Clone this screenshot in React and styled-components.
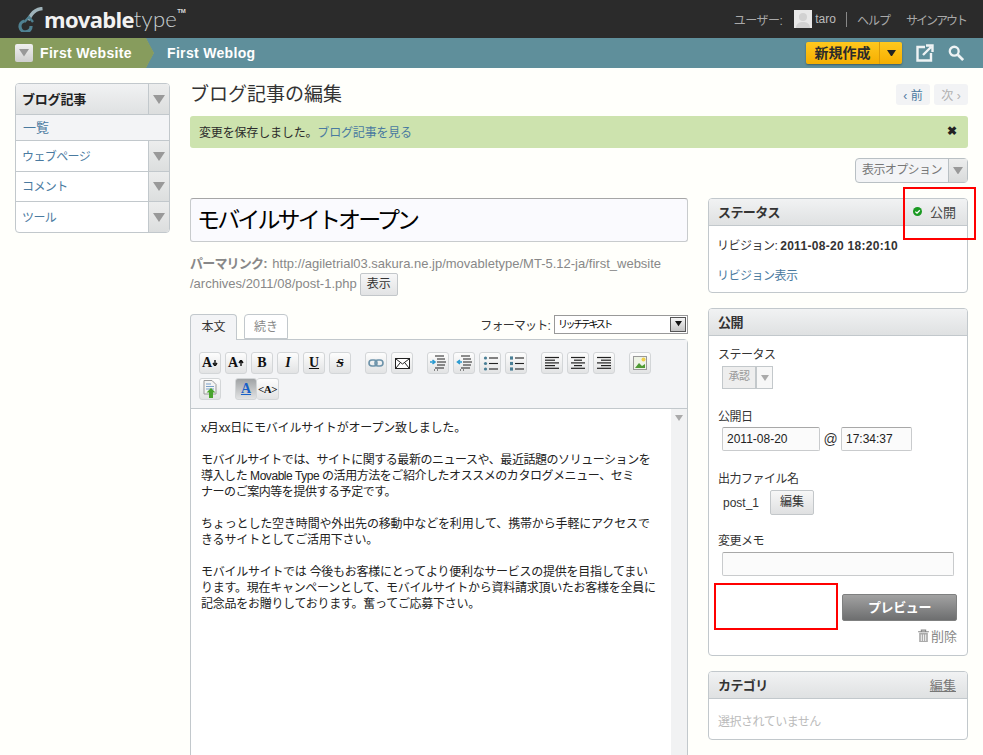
import React from 'react';
import styled, { createGlobalStyle } from 'styled-components';

const Global = createGlobalStyle`
  html, body { margin: 0; padding: 0; height: 755px; overflow: hidden; background: #fffffb; }
  body { font-family: "Liberation Sans", "Noto Sans CJK JP", sans-serif; font-size: 13px; color: #2b2b2b; }
  * { box-sizing: border-box; }
  #root { height: 755px; overflow: hidden; position: relative; }
`;

const TopBar = styled.header`
  height: 38px; background: #2b2b2b; display: flex; align-items: center; justify-content: space-between;
  padding: 0 17px 0 18px;
`;
const Logo = styled.div`
  display: flex; align-items: flex-start; color: #fff; height: 38px; padding-top: 7px;
`;
const LogoBold = styled.span`
  font: bold 22px/24px "Open Sans", "Liberation Sans", sans-serif; color: #f2f2f2; margin-left: 1px; letter-spacing: -0.7px;
`;
const LogoLight = styled.span`
  font: 300 22px/24px "Lato", "Open Sans", sans-serif; color: #c9d0d2; letter-spacing: 0.3px;
`;
const LogoTm = styled.sup`
  font: bold 6px/6px "Liberation Sans", sans-serif; color: #ddd; margin: 1px 0 0 0;
`;
const UserNav = styled.nav`
  display: flex; align-items: center; color: #a9a9a9; font-size: 12px; letter-spacing: -0.5px;
`;
const Avatar = styled.span`
  width: 18px; height: 18px; margin: 0 3px 0 12px; background: #e4e4e4; display: block;
`;
const Divider = styled.span`
  width: 1px; height: 15px; background: #888; margin: 0 10px 0 10px;
`;
const NavLabel = styled.span`
  margin-left: ${p => p.$gap || 0}px; letter-spacing: ${p => p.$ls}px;
`;
const NavName = styled.span`font-size: 12px; letter-spacing: 0; color: #bbb;`;

const NavBar = styled.div`
  height: 30px; background: #5f8f9b; display: flex; align-items: center; position: relative;
`;
const SiteTab = styled.div`
  width: 154px; height: 30px; background: #879c5d; display: flex; align-items: center; padding-left: 15px;
  clip-path: polygon(0 0, 146px 0, 100% 50%, 146px 100%, 0 100%);
`;
const NavChevron = styled.svg`
  width: 10px; height: 30px; margin-left: -9px; flex: none;
`;
const SiteMenu = styled.span`
  width: 18px; height: 18px; border-radius: 2px; background: linear-gradient(#f0f0f0, #cfcfcf);
  display: flex; align-items: center; justify-content: center; margin-right: 7px;
`;
const SiteName = styled.span`
  color: #fff; font: bold 14px "Liberation Sans", sans-serif; letter-spacing: .33px; margin-left: ${p => p.$ml || 0}px;
`;
const NavRight = styled.div`
  margin-left: auto; display: flex; align-items: center; padding-right: 19px;
`;
const NewButton = styled.div`
  width: 96px; height: 22px; display: flex; border-radius: 2px;
  background: linear-gradient(#ffc81e, #f6ae00); box-shadow: 0 1px 2px rgba(0,0,0,.35);
`;
const NewLabel = styled.span`
  width: 74px; text-align: center; font-weight: 700; font-size: 14px; line-height: 22px; color: #2b2b2b;
  border-right: 1px solid #dc9c08;
`;
const NewCaret = styled.span`
  flex: 1; display: flex; align-items: center; justify-content: center;
`;
const NavIcon = styled.svg`
  width: ${p => p.$s}px; height: ${p => p.$s}px; margin-left: ${p => p.$ml}px; flex: none;
`;

const Page = styled.div`
  display: flex; padding: 15px 15px 0; align-items: flex-start; height: 687px;
`;
const Side = styled.aside`
  width: 155px; flex: none; border: 1px solid #c2c8cc; border-radius: 4px; overflow: hidden; background: #fff;
`;
const SideRow = styled.div`
  display: flex; height: ${p => p.$h}px; ${p => p.$border !== false && 'border-bottom: 1px solid #c2c8cc;'}
  ${p => p.$active && 'background: linear-gradient(#f1f2f3, #dfe1e2);'}
`;
const SideLabel = styled.a`
  flex: 1; padding: 0 0 2px 6px; display: flex; align-items: center; font-size: ${p => p.$active ? 13 : 12}px; letter-spacing: ${p => p.$active ? -0.2 : -0.6}px;
  color: ${p => p.$active ? '#222' : '#4a7aa0'}; font-weight: ${p => p.$active ? 700 : 400};
`;
const SideArrow = styled.span`
  width: 21px; border-left: 1px solid #c2c8cc; display: flex; align-items: center; justify-content: center;
  background: linear-gradient(#eceded, #dcdede);
`;
const SideSub = styled.a`
  display: flex; align-items: center; height: 26px; padding: 0 0 2px 7px; background: #f3f4f6; color: #4a7aa0;
  border-bottom: 1px solid #c2c8cc; font-size: 13px;
`;

const Main = styled.main`width: 778px; margin-left: 20px; flex: none;`;
const TitleRow = styled.div`display: flex; justify-content: space-between; align-items: flex-start; height: 33px;`;
const Title = styled.h1`
  margin: 1px 0 0; font-weight: 400; font-size: 19px; line-height: 22px; color: #333; letter-spacing: 0;
`;
const Pager = styled.div`display: flex; gap: 4px; margin-top: 1px;`;
const PagerItem = styled.span`
  height: 21px; width: 34px; background: #f2f3f5; border-radius: 3px; display: flex; align-items: center; justify-content: center;
  font-size: 12px; color: ${p => p.$dim ? '#b0b0b0' : '#4a7aa0'};
`;
const Message = styled.div`
  height: 32px; background: #cde3ae; border-radius: 3px; display: flex; align-items: center; justify-content: space-between;
  padding: 0 11px 2px 9px; font-size: 12px; letter-spacing: -0.17px;
`;
const MsgLink = styled.a`color: #4a7aa0;`;
const Close = styled.b`font-size: 12px; color: #222; line-height: 1;`;
const OptionRow = styled.div`display: flex; justify-content: flex-end; margin-top: 10px; height: 40px;`;
const OptionBtn = styled.div`
  width: 113px; height: 25px; border: 1px solid #b9c0c4; border-radius: 4px; display: flex;
  background: #f3f4f6; color: #777; font-size: 12px; letter-spacing: -0.6px;
`;
const OptionLabel = styled.span`flex: 1; padding-left: 6px; line-height: 23px;`;
const OptionArrow = styled.span`
  width: 19px; border-left: 1px solid #b9c0c4; display: flex; align-items: center; justify-content: center;
  background: linear-gradient(#eceded, #d9dbdb);
`;
const Columns = styled.div`display: flex; justify-content: space-between; align-items: flex-start;`;
const Left = styled.div`width: 498px;`;
const Right = styled.div`width: 260px; display: flex; flex-direction: column; gap: 15px;`;
const TitleInput = styled.div`
  height: 44px; border: 1px solid #c8cbcd; border-top-color: #a6a6a6; border-radius: 3px; background: #fafafe;
  font-size: 23px; line-height: 42px; padding-left: 6px; color: #000; letter-spacing: -2.85px;
`;
const Permalink = styled.div`
  margin-top: 12px; font-size: 13px; line-height: 19px; color: #888; height: 47px;
`;
const PermaBold = styled.b`letter-spacing: -0.8px; margin-right: 2px;`;
const SmallBtn = styled.span`
  display: inline-block; height: 23px; width: 38px; text-align: center; margin-left: 3px; border: 1px solid #c3c7ca; border-radius: 2px;
  background: linear-gradient(#f7f7f7, #e2e3e4); color: #333; font-size: 12px; line-height: 21px; vertical-align: middle;
`;
const Tabs = styled.div`
  display: flex; margin-top: 12px; height: 26px; align-items: flex-end; position: relative;
`;
const Tab = styled.div`
  height: ${p => p.$active ? 26 : 25}px; width: ${p => p.$w}px; margin-right: 7px; border: 1px solid #c2c8cc;
  border-bottom: ${p => p.$active ? '0' : '1px solid #c2c8cc'}; border-radius: 4px 4px 0 0;
  background: ${p => p.$active ? '#f3f4f6' : '#fff'}; color: ${p => p.$active ? '#333' : '#888'};
  text-align: center; font-size: 12px; line-height: 24px; position: relative; z-index: 1; margin-bottom: ${p => p.$active ? -1 : 0}px;
`;
const Format = styled.div`
  margin-left: auto; display: flex; align-items: center; height: 20px; margin-bottom: 5px; font-size: 12px; letter-spacing: -0.8px; color: #333;
`;
const FormatSelect = styled.div`
  width: 134px; height: 19px; margin-left: 4px; border: 1px solid #999; background: #fff; display: flex; justify-content: space-between;
  font-size: 10px; line-height: 17px; padding-left: 3px; letter-spacing: -2.4px; color: #000;
`;
const FormatBtn = styled.span`
  width: 16px; height: 15px; margin: 1px; background: linear-gradient(#f5f5f5, #c4c4c4); border: 1px solid #555;
  display: flex; align-items: center; justify-content: center;
`;
const Editor = styled.div`
  border: 1px solid #c2c8cc; border-radius: 0 4px 0 0; height: 440px; background: #fff;
`;
const Toolbar = styled.div`
  height: 69px; background: #f3f4f6; border-bottom: 1px solid #c2c8cc; padding: 12px 8px 0;
  display: flex; flex-direction: column; gap: 4px;
`;
const ToolRow = styled.div`display: flex; gap: 4px;`;
const Tool = styled.span`
  width: 22px; height: 22px; border: 1px solid #d3d6d8; border-radius: 3px; display: flex; align-items: center; justify-content: center;
  background: ${p => p.$on ? 'linear-gradient(#a0a3a5, #e2e3e4)' : 'linear-gradient(#fdfdfd, #e2e3e4)'}; margin-left: ${p => p.$ml || 0}px;
  font: bold ${p => p.$fs || 13}px "Liberation Serif", serif; color: ${p => p.$c || '#111'};
  ${p => p.$u && 'text-decoration: underline;'} ${p => p.$i && 'font-style: italic;'} ${p => p.$s && 'text-decoration: line-through;'}
  ${p => p.$join && 'margin-left: -4px; border-left: 0; letter-spacing: -.5px;'}
`;
const EditorBody = styled.div`
  display: flex; height: 370px;
`;
const Content = styled.div`
  flex: 1; padding: 11px 0 0 10px; font-size: 12px; line-height: 16px; color: #222;
`;
const Para = styled.p`margin: 0 0 16px; white-space: pre; letter-spacing: ${p => p.$ls}px;`;
const Scroll = styled.div`
  width: 16px; background: #f1f2f3; display: flex; justify-content: center; padding-top: 6px;
`;
const Panel = styled.section`
  border: 1px solid #c2c8cc; border-radius: 4px; background: #fff; height: ${p => p.$h}px; overflow: hidden;
`;
const PanelHead = styled.div`
  height: 27px; background: linear-gradient(#f1f2f3, #dfe1e2); border-bottom: 1px solid #c2c8cc;
  display: flex; align-items: center; justify-content: space-between; padding: 0 11px 2px 9px;
`;
const PanelTitle = styled.h3`margin: 0; font-size: 13px; font-weight: 700; color: #333; letter-spacing: -0.6px;`;
const PanelBody = styled.div`padding: ${p => p.$pad || '11px 9px 0'}; font-size: 12px; letter-spacing: -0.5px;`;
const HeadRight = styled.span`display: flex; align-items: center; gap: 8px; font-size: 13px; color: #444; letter-spacing: 0;`;
const HeadLink = styled.a`font-size: 13px; color: #777; text-decoration: underline; letter-spacing: 0.1px;`;
const Rev = styled.b`letter-spacing: .3px; color: #333;`;
const RevLine = styled.div`height: 30px; line-height: 17px; color: #333;`;
const BlueLink = styled.a`color: #4a7aa0; line-height: 17px;`;
const Field = styled.div`height: ${p => p.$h}px; color: #333;`;
const FieldLabel = styled.div`line-height: 17px;`;
const StatusSelect = styled.div`
  display: flex; width: 51px; height: 23px; margin: 2px 0 0 4px; border: 1px solid #c3c8cb; background: #eee; color: #999; font-size: 11px; line-height: 18px;
`;
const StatusText = styled.span`flex: 1; text-align: center;`;
const StatusArrow = styled.span`
  width: 17px; background: #f7f7f7; border-left: 2px solid #c3c8cb; display: flex; align-items: center; justify-content: center;
`;
const DateRow = styled.div`display: flex; align-items: center; margin: 1px 0 0 4px; letter-spacing: 0;`;
const TextBox = styled.span`
  display: block; width: ${p => p.$w}px; height: ${p => p.$h || 24}px; border: 1px solid #c9cbcd; border-top-color: #a8a8a8; border-radius: 2px;
  background: #fbfbfb; padding-left: 4px; line-height: 22px; font-size: 12px; color: #222;
`;
const At = styled.span`width: 21px; text-align: center; font-size: 14px; color: #333;`;
const FileRow = styled.div`display: flex; align-items: center; margin: 2px 0 0 5px; letter-spacing: 0;`;
const FileName = styled.span`width: 47px; color: #333;`;
const EditBtn = styled.span`
  width: 44px; height: 25px; border: 1px solid #c3c7ca; border-radius: 2px; background: linear-gradient(#f7f7f7, #dfe0e1);
  text-align: center; line-height: 23px; color: #333;
`;
const MemoBox = styled.div`margin: 2px 0 0 4px;`;
const Actions = styled.div`display: flex; justify-content: flex-end; margin: 17px 1px 0 0;`;
const PreviewBtn = styled.span`
  width: 115px; height: 27px; border-radius: 2px; background: linear-gradient(#a2a2a2, #6d6e6f); border: 1px solid #7f8080;
  text-align: center; color: #fff; font-weight: 700; font-size: 13px; line-height: 25px; letter-spacing: -0.4px;
`;
const DeleteRow = styled.div`display: flex; justify-content: flex-end; align-items: center; margin: 5px 1px 0 0; color: #888; gap: 1px; font-size: 13px; letter-spacing: 0;`;
const Muted = styled.div`color: #bbb; line-height: 17px;`;
const Mark = styled.div`
  position: absolute; left: ${p => p.$x}px; top: ${p => p.$y}px; width: ${p => p.$w}px; height: ${p => p.$h}px; border: 2px solid #f00;
  background: ${p => p.$fill ? '#fff' : 'transparent'};
`;
const Sized = styled.svg`display: block; width: ${p => p.$w}px; height: ${p => p.$h || p.$w}px;`;

const Tri = ({ s = 12, c = '#999' }) => (
  <Sized $w={s} $h={s * 0.75} viewBox="0 0 12 9"><path d="M0 0h12L6 9z" fill={c} /></Sized>
);

const Lines = ({ n = 4, w = 14, c = '#222', s = 3 }) => (
  <Sized $w={w} $h={w} viewBox="0 0 14 14">
    {Array.from({ length: n }, (_, i) => (
      <path key={i} d={`M${s === 'c' && i % 2 ? 3 : s === 'r' && i % 2 ? 4 : 0} ${1.5 + i * 2.7}H${s === 'c' && i % 2 ? 11 : s === 'l' && i % 2 ? 10 : 14}`} stroke={c} strokeWidth="1.2" />
    ))}
  </Sized>
);
const ListIcon = ({ num }) => (
  <Sized $w={15} viewBox="0 0 15 15">
    {[2, 7.5, 13].map(y => (
      <g key={y}>
        {num ? <rect x="1" y={y - 1.6} width="3" height="3.2" fill="#4a7f96" /> : <circle cx="2.5" cy={y} r="1.6" fill="#4a7f96" />}
        <path d={`M6 ${y}H15`} stroke="#222" strokeWidth="1.1" />
      </g>
    ))}
  </Sized>
);
const Indent = ({ out }) => (
  <Sized $w={16} viewBox="0 0 16 16">
    <path d="M5 1h9M7 4h8M7 7h9M7 10h8M5 13h9" stroke="#222" strokeWidth="1.1" />
    <path d="M4 15h1M7 15h1" stroke="#222" strokeWidth="1" />
    <path d={out ? 'M6 7H2M4 5 1.5 7 4 9' : 'M0 7H4M2.5 5 5 7 2.5 9'} stroke="#2a9ad0" strokeWidth="1.6" fill="none" />
  </Sized>
);

export default function App() {
  return (
    <>
      <Global />
      <TopBar>
        <Logo>
          <Sized $w={25} $h={25} viewBox="0 0 25 25">
            <path d="M24.5 1.5C19 2 16 4 13.5 7.5L10 13" stroke="#9fb3ba" strokeWidth="3.4" fill="none" />
            <path d="M6.5 14a5.5 5.5 0 1 0 6.5 5" stroke="#4f8191" strokeWidth="3.2" fill="none" />
            <path d="M6.5 15 11 10l4 5" fill="none" stroke="#4f8191" strokeWidth="2.4" />
          </Sized>
          <LogoBold>movable</LogoBold><LogoLight>type</LogoLight><LogoTm>TM</LogoTm>
        </Logo>
        <UserNav>
          ユーザー:
          <Avatar>
            <Sized $w={18} viewBox="0 0 18 18"><rect width="18" height="18" fill="#e8e8e8" /><circle cx="9" cy="7" r="4" fill="#d2d2d2" /><path d="M2 18c0-5 4-6 7-6s7 1 7 6z" fill="#d2d2d2" /></Sized>
          </Avatar>
          <NavName>taro</NavName>
          <Divider />
          <NavLabel $ls={-1}>ヘルプ</NavLabel>
          <NavLabel $gap={16} $ls={-2}>サインアウト</NavLabel>
        </UserNav>
      </TopBar>
      <NavBar>
        <SiteTab>
          <SiteMenu><Tri s={10} /></SiteMenu>
          <SiteName>First Website</SiteName>
        </SiteTab>
        <NavChevron viewBox="0 0 10 30"><path d="M0 0 8 15 0 30" fill="none" stroke="#cfd8c0" strokeWidth="1" /></NavChevron>
        <SiteName $ml={12}>First Weblog</SiteName>
        <NavRight>
          <NewButton>
            <NewLabel>新規作成</NewLabel>
            <NewCaret><Tri s={9} c="#222" /></NewCaret>
          </NewButton>
          <NavIcon $s={18} $ml={14} viewBox="0 0 18 18">
            <path d="M9 3H1.5v13.5H15V9" stroke="#eef3f4" strokeWidth="2.4" fill="none" />
            <path d="M7 11 15 3M10 1.5h6.5V8" stroke="#eef3f4" strokeWidth="2.4" fill="none" />
          </NavIcon>
          <NavIcon $s={16} $ml={14} viewBox="0 0 18 18">
            <circle cx="7" cy="7" r="5" stroke="#eef3f4" strokeWidth="2.6" fill="none" />
            <path d="M11 11l6 6" stroke="#eef3f4" strokeWidth="3" />
          </NavIcon>
        </NavRight>
      </NavBar>
      <Page>
        <Side>
          <SideRow $h={31} $active><SideLabel $active>ブログ記事</SideLabel><SideArrow><Tri /></SideArrow></SideRow>
          <SideSub>一覧</SideSub>
          <SideRow $h={31}><SideLabel>ウェブページ</SideLabel><SideArrow><Tri /></SideArrow></SideRow>
          <SideRow $h={30}><SideLabel>コメント</SideLabel><SideArrow><Tri /></SideArrow></SideRow>
          <SideRow $h={30} $border={false}><SideLabel>ツール</SideLabel><SideArrow><Tri /></SideArrow></SideRow>
        </Side>
        <Main>
          <TitleRow>
            <Title>ブログ記事の編集</Title>
            <Pager>
              <PagerItem>‹ 前</PagerItem>
              <PagerItem $dim>次 ›</PagerItem>
            </Pager>
          </TitleRow>
          <Message>
            <span>変更を保存しました。<MsgLink>ブログ記事を見る</MsgLink></span>
            <Close>✖</Close>
          </Message>
          <OptionRow>
            <OptionBtn><OptionLabel>表示オプション</OptionLabel><OptionArrow><Tri s={10} /></OptionArrow></OptionBtn>
          </OptionRow>
          <Columns>
            <Left>
              <TitleInput>モバイルサイトオープン</TitleInput>
              <Permalink>
                <PermaBold>パーマリンク:</PermaBold> http://agiletrial03.sakura.ne.jp/movabletype/MT-5.12-ja/first_website<br />
                /archives/2011/08/post-1.php<SmallBtn>表示</SmallBtn>
              </Permalink>
              <Tabs>
                <Tab $active $w={47}>本文</Tab>
                <Tab $w={44}>続き</Tab>
                <Format>
                  フォーマット:
                  <FormatSelect>リッチテキスト<FormatBtn><Tri s={7} c="#111" /></FormatBtn></FormatSelect>
                </Format>
              </Tabs>
              <Editor>
                <Toolbar>
                  <ToolRow>
                    <Tool $fs={14}>A<Sized $w={6} viewBox="0 0 6 6"><path d="M3 0v4M1 3l2 3 2-3" stroke="#111" strokeWidth="1.4" fill="none" /></Sized></Tool>
                    <Tool $fs={14}>A<Sized $w={6} viewBox="0 0 6 6"><path d="M3 6V2M1 3l2-3 2 3" stroke="#111" strokeWidth="1.4" fill="none" /></Sized></Tool>
                    <Tool $fs={14}>B</Tool>
                    <Tool $i $fs={14}>I</Tool>
                    <Tool $u $fs={14}>U</Tool>
                    <Tool $s $i>S</Tool>
                    <Tool $ml={10}>
                      <Sized $w={16} $h={10} viewBox="0 0 16 10"><rect x="1" y="2" width="8" height="6" rx="3" stroke="#6d93aa" strokeWidth="1.6" fill="none" /><rect x="7" y="2" width="8" height="6" rx="3" stroke="#6d93aa" strokeWidth="1.6" fill="none" /></Sized>
                    </Tool>
                    <Tool>
                      <Sized $w={15} $h={11} viewBox="0 0 15 11"><rect x=".5" y=".5" width="14" height="10" fill="#fff" stroke="#222" /><path d="M1 1l6.5 5L14 1M1 10l4-5M14 10l-4-5" stroke="#222" fill="none" /></Sized>
                    </Tool>
                    <Tool $ml={10}><Indent /></Tool>
                    <Tool><Indent out /></Tool>
                    <Tool><ListIcon /></Tool>
                    <Tool><ListIcon num /></Tool>
                    <Tool $ml={10}><Lines n={5} s="l" /></Tool>
                    <Tool><Lines n={5} s="c" /></Tool>
                    <Tool><Lines n={5} s="r" /></Tool>
                    <Tool $ml={10}>
                      <Sized $w={14} viewBox="0 0 14 14"><rect x=".5" y=".5" width="13" height="13" fill="#eef3e6" stroke="#999" /><path d="M2 12l4-5 3 3 3-2v4z" fill="#4f9a35" /><circle cx="10.5" cy="3.5" r="2" fill="#f0cf4a" /></Sized>
                    </Tool>
                  </ToolRow>
                  <ToolRow>
                    <Tool>
                      <Sized $w={14} $h={18} viewBox="0 0 14 18"><path d="M1 .5h8l4 4V14H1z" fill="#f4f4f4" stroke="#999" /><path d="M3 4h5M3 6.5h8M3 9h8" stroke="#7ba0c9" /><path d="M8 8l4.5 4.5H10V18H6v-5.5H3.5z" fill="#48a32c" /></Sized>
                    </Tool>
                    <Tool $on $ml={10} $u $c="#1860c8" $fs={14}>A</Tool>
                    <Tool $join $fs={11}>&lt;A&gt;</Tool>
                  </ToolRow>
                </Toolbar>
                <EditorBody>
                  <Content>
                    <Para $ls={-0.18}>x月xx日にモバイルサイトがオープン致しました。</Para>
                    <Para $ls={-0.45}>{'モバイルサイトでは、サイトに関する最新のニュースや、最近話題のソリューションを\n導入した Movable Type の活用方法をご紹介したオススメのカタログメニュー、セミ\nナーのご案内等を提供する予定です。'}</Para>
                    <Para $ls={-0.15}>{'ちょっとした空き時間や外出先の移動中などを利用して、携帯から手軽にアクセスで\nきるサイトとしてご活用下さい。'}</Para>
                    <Para $ls={-0.27}>{'モバイルサイトでは 今後もお客様にとってより便利なサービスの提供を目指してまい\nります。現在キャンペーンとして、モバイルサイトから資料請求頂いたお客様を全員に\n記念品をお贈りしております。奮ってご応募下さい。'}</Para>
                  </Content>
                  <Scroll><Tri s={8} c="#aaa" /></Scroll>
                </EditorBody>
              </Editor>
            </Left>
            <Right>
              <Panel $h={95}>
                <PanelHead>
                  <PanelTitle>ステータス</PanelTitle>
                  <HeadRight>
                    <Sized $w={9} viewBox="0 0 9 9"><circle cx="4.5" cy="4.5" r="4.5" fill="#1a9a22" /><path d="M2.3 4.6 4 6.2l2.8-3" stroke="#fff" strokeWidth="1.3" fill="none" /></Sized>
                    公開
                  </HeadRight>
                </PanelHead>
                <PanelBody $pad="12px 8px 0">
                  <RevLine>リビジョン: <Rev>2011-08-20 18:20:10</Rev></RevLine>
                  <BlueLink>リビジョン表示</BlueLink>
                </PanelBody>
              </Panel>
              <Panel $h={348}>
                <PanelHead><PanelTitle>公開</PanelTitle></PanelHead>
                <PanelBody>
                  <Field $h={62}>
                    <FieldLabel>ステータス</FieldLabel>
                    <StatusSelect><StatusText>承認</StatusText><StatusArrow><Tri s={8} c="#aaa" /></StatusArrow></StatusSelect>
                  </Field>
                  <Field $h={62}>
                    <FieldLabel>公開日</FieldLabel>
                    <DateRow><TextBox $w={98}>2011-08-20</TextBox><At>@</At><TextBox $w={71}>17:34:37</TextBox></DateRow>
                  </Field>
                  <Field $h={62}>
                    <FieldLabel>出力ファイル名</FieldLabel>
                    <FileRow><FileName>post_1</FileName><EditBtn>編集</EditBtn></FileRow>
                  </Field>
                  <Field $h={44}>
                    <FieldLabel>変更メモ</FieldLabel>
                    <MemoBox><TextBox $w={232} /></MemoBox>
                  </Field>
                  <Actions><PreviewBtn>プレビュー</PreviewBtn></Actions>
                  <DeleteRow>
                    <Sized $w={13} viewBox="0 0 12 12"><path d="M1 2.5h10M4 2.5V1h4v1.5" stroke="#888" fill="none" /><path d="M2 3.5h8V12H2z" fill="#aaa" /><path d="M4 5v6M6 5v6M8 5v6" stroke="#eee" /></Sized>
                    削除
                  </DeleteRow>
                </PanelBody>
              </Panel>
              <Panel $h={69}>
                <PanelHead><PanelTitle>カテゴリ</PanelTitle><HeadLink>編集</HeadLink></PanelHead>
                <PanelBody $pad="15px 9px 0"><Muted>選択されていません</Muted></PanelBody>
              </Panel>
            </Right>
          </Columns>
        </Main>
      </Page>
      <Mark $x={903} $y={187} $w={73} $h={53} />
      <Mark $x={714} $y={583} $w={124} $h={47} $fill />
    </>
  );
}
